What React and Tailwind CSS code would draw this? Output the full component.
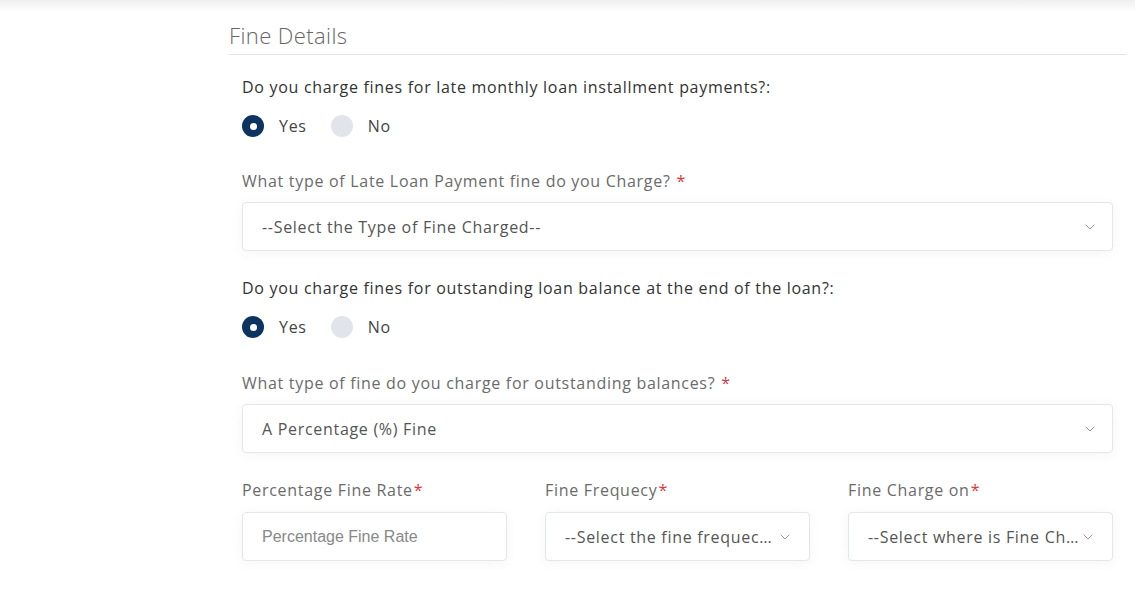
import { ChevronDown } from 'lucide-react';

const font = { fontFamily: '"Open Sans", "Noto Sans", sans-serif' };

function Radio({ checked, label }) {
  return (
    <label className="flex items-center gap-[15px] mr-[24px]">
      {checked ? (
        <span className="w-[22px] h-[22px] rounded-full bg-[#0c3461] flex items-center justify-center">
          <span className="w-[7px] h-[7px] rounded-full bg-white" />
        </span>
      ) : (
        <span className="w-[22px] h-[22px] rounded-full bg-[#e1e4eb]" />
      )}
      <span className="text-[16px] text-[#444] tracking-[0.7px]">{label}</span>
    </label>
  );
}

function Question({ text }) {
  return (
    <div>
      <p className="text-[16px] text-[#333] leading-[24px] tracking-[0.7px]">{text}</p>
      <div className="flex items-center mt-[15px] h-[24px]">
        <Radio checked label="Yes" />
        <Radio label="No" />
      </div>
    </div>
  );
}

function Label({ text, spaced = true }) {
  return (
    <p className="text-[16px] text-[#6b6b6b] leading-[24px] tracking-[0.7px]">
      {text}
      <span className={`text-[#d9363e] ${spaced ? 'ml-[6px]' : 'ml-[1px]'}`}>*</span>
    </p>
  );
}

function Select({ value, small }) {
  return (
    <div className={`h-[49px] bg-white border border-[#e4e6ea] rounded-[4px] shadow-[0_2px_12px_rgba(80,90,140,0.06)] flex items-center justify-between pl-[19px] ${small ? 'pr-[16px]' : 'pr-[14px]'}`}>
      <span className="text-[16px] text-[#555] truncate tracking-[0.7px]">{value}</span>
      <ChevronDown className="w-[16px] h-[16px] text-[#888] shrink-0" strokeWidth={1.3} />
    </div>
  );
}

export default function App() {
  return (
    <div className="w-[1135px] h-[607px] bg-white relative overflow-hidden" style={font}>
      <div className="absolute top-0 left-0 right-0 h-[12px] bg-gradient-to-b from-[#efefef] to-white" />
      <div className="relative ml-[229px] mr-[9px] pt-[19px]">
        <h2 className="text-[22px] font-light text-[#666] leading-[32px] tracking-[0.4px] pb-[3px] border-b border-[#e3e3e3]">Fine Details</h2>
        <div className="px-[13px]">
          <div className="mt-[20px]">
            <Question text="Do you charge fines for late monthly loan installment payments?:" />
          </div>
          <div className="mt-[31px]">
            <Label text="What type of Late Loan Payment fine do you Charge?" />
            <div className="mt-[9px]">
              <Select value="--Select the Type of Fine Charged--" />
            </div>
          </div>
          <div className="mt-[25px]">
            <Question text="Do you charge fines for outstanding loan balance at the end of the loan?:" />
          </div>
          <div className="mt-[32px]">
            <Label text="What type of fine do you charge for outstanding balances?" />
            <div className="mt-[9px]">
              <Select value="A Percentage (%) Fine" />
            </div>
          </div>
          <div className="mt-[25px] grid grid-cols-3 gap-x-[38px]">
            <div>
              <Label text="Percentage Fine Rate" spaced={false} />
              <div className="mt-[10px] h-[49px] bg-white border border-[#e4e6ea] rounded-[4px] shadow-[0_2px_12px_rgba(80,90,140,0.06)] flex items-center pl-[19px]">
                <span className="text-[16px] text-[#888]" style={{ fontFamily: '"Liberation Sans", Arial, sans-serif' }}>Percentage Fine Rate</span>
              </div>
            </div>
            <div>
              <Label text="Fine Frequecy" spaced={false} />
              <div className="mt-[10px]">
                <Select value="--Select the fine frequecy--" small />
              </div>
            </div>
            <div>
              <Label text="Fine Charge on" spaced={false} />
              <div className="mt-[10px]">
                <Select value="--Select where is Fine Charged--" small />
              </div>
            </div>
          </div>
        </div>
      </div>
    </div>
  );
}
